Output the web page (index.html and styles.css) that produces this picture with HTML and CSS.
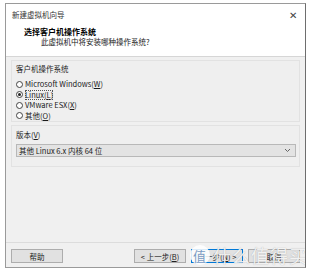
FILE: index.html
```html
<!DOCTYPE html>
<html lang="zh-CN">

<head>
    <meta charset="UTF-8">
    <title>新建虚拟机向导</title>
    <link rel="stylesheet" href="styles.css">
</head>

<body>
    <div class="wizard">
        <div class="title-bar">
            <span>新建虚拟机向导</span>
            <span class="close">&#x2715;</span>
        </div>

        <div class="header">
            <h1>选择客户机操作系统</h1>
            <p>此虚拟机中将安装哪种操作系统?</p>
        </div>

        <div class="content">
            <div class="group">
                <div class="group-label">客户机操作系统</div>
                <label class="radio"><span class="dot"></span>Microsoft Windows(<u>W</u>)</label>
                <label class="radio checked"><span class="dot"></span><span class="focus">Linux(<u>L</u>)</span></label>
                <label class="radio"><span class="dot"></span>VMware ESX(<u>X</u>)</label>
                <label class="radio"><span class="dot"></span>其他(<u>O</u>)</label>
            </div>

            <div class="group group-version">
                <div class="group-label">版本(<u>V</u>)</div>
                <div class="select">
                    <span>其他 Linux 6.x 内核 64 位</span>
                    <svg width="7" height="5" viewBox="0 0 7 5"><path d="M1 1 L3.5 3.5 L6 1" fill="none" stroke="#666" stroke-width="1"/></svg>
                </div>
            </div>
        </div>

        <div class="footer">
            <button class="btn">帮助</button>
            <div class="nav">
                <button class="btn">&lt; 上一步(<u>B</u>)</button>
                <button class="btn primary">下一步(<u>N</u>) &gt;</button>
                <button class="btn">取消</button>
            </div>
        </div>

        <div class="watermark">
            <span class="wm-logo">值</span>
            <span>什么值得买</span>
        </div>
    </div>
</body>

</html>
```

FILE: styles.css
```css
body {
    margin: 0;
    background-color: #fff;
    font-family: "Noto Sans CJK SC", "Noto Sans", sans-serif;
    font-size: 7.5px;
    color: #1a1a1a;
}

.wizard {
    position: relative;
    margin: 3px 0 0 5px;
    width: 299px;
    height: 263px;
    border: 1px solid #9a9a9a;
    border-right-color: #6e6e6e;
    display: flex;
    flex-direction: column;
    overflow: hidden;
}

.title-bar {
    height: 20px;
    display: flex;
    align-items: center;
    justify-content: space-between;
    padding: 0 8px 0 6px;
    background-color: #fff;
    color: #333;
}

.close {
    font-size: 10px;
    color: #444;
}

.header {
    height: 33px;
    background-color: #fff;
    border-bottom: 1px solid #d6d6d6;
    padding-left: 18px;
    box-sizing: border-box;
}

.header h1 {
    margin: 2px 0 0;
    font-size: 8px;
    line-height: 11px;
    font-weight: 700;
    color: #000;
}

.header p {
    margin: 0;
    padding-left: 17px;
    line-height: 10px;
}

.content {
    flex: 1;
    background-color: #f0f0f0;
    padding: 3px 5px 0 5px;
}

.group {
    border: 1px solid #e2e2e2;
    background-color: #efefef;
    height: 62px;
    box-sizing: border-box;
    padding: 2px 0 0 4px;
}

.group-label {
    line-height: 11px;
    margin-bottom: 5px;
}

.radio {
    display: flex;
    align-items: center;
    height: 10.5px;
    line-height: 10px;
}

.dot {
    width: 5px;
    height: 5px;
    border: 1px solid #444;
    border-radius: 50%;
    margin-right: 2px;
    background-color: #fff;
    position: relative;
}

.checked .dot::after {
    content: "";
    position: absolute;
    left: 1px;
    top: 1px;
    width: 3px;
    height: 3px;
    border-radius: 50%;
    background-color: #222;
}

.focus {
    outline: 1px dotted #555;
    outline-offset: -1px;
}

.group-version {
    margin-top: 3px;
    height: 42px;
    padding-top: 3px;
}

.group-version .group-label {
    margin-bottom: 4px;
}

.select {
    height: 13px;
    margin-right: 3px;
    border: 1px solid #b8b8b8;
    background-color: #e3e3e3;
    display: flex;
    align-items: center;
    justify-content: space-between;
    padding: 0 4px 0 2px;
    box-sizing: border-box;
}

.footer {
    height: 25px;
    border-top: 1px solid #dcdcdc;
    background-color: #f0f0f0;
    display: flex;
    justify-content: space-between;
    align-items: flex-start;
    padding: 6px 5px 0 5px;
    box-sizing: border-box;
}

.nav {
    display: flex;
    gap: 5px;
}

.btn {
    width: 52px;
    height: 14px;
    padding: 0;
    border: 1px solid #adadad;
    background-color: #e1e1e1;
    font-family: inherit;
    font-size: 7.5px;
    color: #222;
}

.btn.primary {
    border-color: #0078d7;
}

.watermark {
    position: absolute;
    left: 184px;
    top: 238px;
    display: flex;
    align-items: center;
    gap: 3px;
    font-size: 18px;
    color: rgba(255, 255, 255, 0.85);
    text-shadow: 0 0 1px rgba(120, 120, 120, 0.6);
    letter-spacing: 1px;
    white-space: nowrap;
}

.wm-logo {
    width: 20px;
    height: 20px;
    border-radius: 50%;
    background-color: rgba(255, 255, 255, 0.85);
    color: #7a9bc4;
    font-size: 13px;
    text-shadow: none;
    display: flex;
    align-items: center;
    justify-content: center;
}
```
